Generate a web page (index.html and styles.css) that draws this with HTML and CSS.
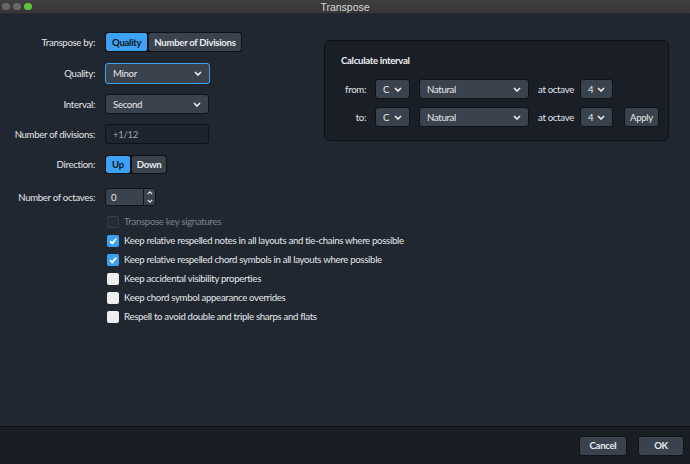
FILE: index.html
```html
<!DOCTYPE html>
<html>
<head>
<meta charset="utf-8">
<link rel="stylesheet" href="styles.css">
</head>
<body>
<div class="window">
  <div class="titlebar">
    <div class="lights">
      <span class="light grey"></span>
      <span class="light grey"></span>
      <span class="light green"></span>
    </div>
    <div class="title">Transpose</div>
  </div>
  <div class="main">
    <div class="form">
      <div class="row r1">
        <div class="label">Transpose by:</div>
        <div class="seg">
          <span class="segbtn active">Quality</span>
          <span class="segbtn">Number of Divisions</span>
        </div>
      </div>
      <div class="row r2">
        <div class="label">Quality:</div>
        <div class="select focus w105"><span>Minor</span><svg class="chev" viewBox="0 0 8 5"><path d="M1 1 L4 4 L7 1"/></svg></div>
      </div>
      <div class="row r3">
        <div class="label">Interval:</div>
        <div class="select w104"><span>Second</span><svg class="chev" viewBox="0 0 8 5"><path d="M1 1 L4 4 L7 1"/></svg></div>
      </div>
      <div class="row r4">
        <div class="label">Number of divisions:</div>
        <div class="input w104">+1/12</div>
      </div>
      <div class="row r5">
        <div class="label">Direction:</div>
        <div class="seg">
          <span class="segbtn active">Up</span>
          <span class="segbtn">Down</span>
        </div>
      </div>
      <div class="row r6">
        <div class="label">Number of octaves:</div>
        <div class="spin">
          <span class="spinval">0</span>
          <span class="spinarrows">
            <svg viewBox="0 0 8 5"><path d="M1 4 L4 1 L7 4"/></svg>
            <svg viewBox="0 0 8 5"><path d="M1 1 L4 4 L7 1"/></svg>
          </span>
        </div>
      </div>
      <div class="checks">
        <div class="check disabled"><span class="box"></span><span>Transpose key signatures</span></div>
        <div class="check"><span class="box on"><svg viewBox="0 0 10 10"><path d="M2 5.2 L4.2 7.4 L8.2 2.6"/></svg></span><span>Keep relative respelled notes in all layouts and tie-chains where possible</span></div>
        <div class="check"><span class="box on"><svg viewBox="0 0 10 10"><path d="M2 5.2 L4.2 7.4 L8.2 2.6"/></svg></span><span>Keep relative respelled chord symbols in all layouts where possible</span></div>
        <div class="check"><span class="box"></span><span>Keep accidental visibility properties</span></div>
        <div class="check"><span class="box"></span><span>Keep chord symbol appearance overrides</span></div>
        <div class="check"><span class="box"></span><span>Respell to avoid double and triple sharps and flats</span></div>
      </div>
    </div>
    <div class="panel">
      <div class="panel-title">Calculate interval</div>
      <div class="prow p1">
        <div class="plabel">from:</div>
        <div class="select w34"><span>C</span><svg class="chev" viewBox="0 0 8 5"><path d="M1 1 L4 4 L7 1"/></svg></div>
        <div class="select w109"><span>Natural</span><svg class="chev" viewBox="0 0 8 5"><path d="M1 1 L4 4 L7 1"/></svg></div>
        <div class="octlabel">at octave</div>
        <div class="select w32"><span>4</span><svg class="chev" viewBox="0 0 8 5"><path d="M1 1 L4 4 L7 1"/></svg></div>
      </div>
      <div class="prow p2">
        <div class="plabel">to:</div>
        <div class="select w34"><span>C</span><svg class="chev" viewBox="0 0 8 5"><path d="M1 1 L4 4 L7 1"/></svg></div>
        <div class="select w109"><span>Natural</span><svg class="chev" viewBox="0 0 8 5"><path d="M1 1 L4 4 L7 1"/></svg></div>
        <div class="octlabel">at octave</div>
        <div class="select w32"><span>4</span><svg class="chev" viewBox="0 0 8 5"><path d="M1 1 L4 4 L7 1"/></svg></div>
        <div class="btn apply">Apply</div>
      </div>
    </div>
  </div>
  <div class="footer">
    <div class="btn fbtn cancel">Cancel</div>
    <div class="btn fbtn ok">OK</div>
  </div>
</div>
</body>
</html>
```

FILE: styles.css
```css
* { box-sizing: border-box; }
html, body { margin: 0; padding: 0; }
body {
  width: 690px;
  height: 464px;
  overflow: hidden;
  background: #212731;
  font-family: "Lato", "Open Sans", sans-serif;
  font-size: 9.6px;
  letter-spacing: -0.3px;
  color: #e3e6ea;
  white-space: nowrap;
}
.window { display: flex; flex-direction: column; height: 464px; }
.titlebar {
  height: 14px;
  background: linear-gradient(#3f3f40, #363637);
  border-bottom: 1px solid #2a2a2b;
  display: flex;
  align-items: center;
  position: relative;
}
.lights { display: flex; gap: 3.5px; padding-left: 2px; }
.light { width: 7.5px; height: 7.5px; border-radius: 50%; display: block; }
.light.grey { background: #676767; }
.light.green { background: #5fc43d; }
.title {
  position: absolute;
  left: 0; right: 0; top: 0;
  text-align: center;
  line-height: 14px;
  font-size: 10.5px;
  letter-spacing: 0;
  color: #d8d8d8;
  font-family: "Liberation Sans", sans-serif;
}
.main {
  flex: 1;
  display: flex;
  background: #212731;
  border-bottom: 1px solid #0b0d11;
}
.form { width: 324px; flex: none; padding-top: 18px; }
.row { display: flex; align-items: center; }
.label {
  width: 95px;
  flex: none;
  text-align: right;
  margin-right: 10px;
}
.r1 { height: 20px; }
.r2 { height: 21px; margin-top: 11px; }
.r3 { height: 20px; margin-top: 10px; }
.r4 { height: 20px; margin-top: 10px; }
.r5 { height: 19px; margin-top: 11px; }
.r6 { height: 18px; margin-top: 14px; }

.seg {
  display: flex;
  height: 100%;
  background: #101318;
  border: 1px solid #0e1115;
  border-radius: 3px;
  gap: 2px;
  overflow: hidden;
}
.segbtn {
  display: flex;
  align-items: center;
  padding: 0 5px;
  background: #3a424e;
  color: #e8ebee;
  font-weight: bold;
  border-radius: 2px;
}
.segbtn.active { background: #3da2f6; color: #0d1520; padding: 0 6px; }

.select {
  height: 100%;
  background: #3a424e;
  border: 1px solid #0f1216;
  border-radius: 3px;
  display: flex;
  align-items: center;
  justify-content: space-between;
  padding: 0 7px 0 7px;
  color: #e6e9ec;
  flex: none;
}
.select.focus { border: 1px solid #3ea2f2; }
.chev { width: 8px; height: 5px; fill: none; stroke: #eef0f2; stroke-width: 1.6; }
.w105 { width: 105px; }
.w104 { width: 104px; }
.input {
  height: 100%;
  background: #1e242d;
  border: 1px solid #0f1216;
  border-radius: 3px;
  display: flex;
  align-items: center;
  padding: 0 7px;
  color: #9ca3ab;
}
.spin {
  width: 51px;
  height: 100%;
  display: flex;
  background: #3a424e;
  border: 1px solid #0f1216;
  border-radius: 3px;
}
.spinval { flex: 1; display: flex; align-items: center; padding-left: 5px; }
.spinarrows {
  width: 12px;
  border-left: 1px solid #12161b;
  display: flex;
  flex-direction: column;
  align-items: center;
  justify-content: space-around;
}
.spinarrows svg { width: 6px; height: 4px; fill: none; stroke: #e6e9ec; stroke-width: 1.5; }

.checks { margin-top: 6px; padding-left: 107px; }
.check { height: 19px; display: flex; align-items: center; gap: 5px; color: #e4e7ea; }
.box {
  width: 12px; height: 12px;
  flex: none;
  border-radius: 2px;
  background: #eeeeee;
  display: flex; align-items: center; justify-content: center;
}
.box.on { background: #3ba0f0; }
.box svg { width: 10px; height: 10px; fill: none; stroke: #ffffff; stroke-width: 1.7; }
.check.disabled { color: #7b828a; }
.check.disabled .box { background: #262c35; border: 1px solid #363d47; }

.panel {
  margin-top: 26px;
  width: 345px;
  height: 101px;
  flex: none;
  background: #1a1f27;
  border: 1px solid #0c0f13;
  border-radius: 6px;
  padding: 13px 0 0 0;
}
.panel-title { padding-left: 16px; font-weight: bold; color: #eef0f2; height: 13px; line-height: 13px; }
.prow { display: flex; align-items: center; height: 20px; }
.p1 { margin-top: 12px; }
.p2 { margin-top: 8px; }
.plabel { width: 41px; text-align: right; margin-right: 9px; flex: none; }
.w34 { width: 35px; margin-right: 9px; }
.w109 { width: 110px; margin-right: 9px; }
.w32 { width: 33px; }
.octlabel { width: 42px; flex: none; }
.btn {
  height: 20px;
  background: #3a424e;
  border: 1px solid #0f1216;
  border-radius: 3px;
  display: flex;
  align-items: center;
  justify-content: center;
  color: #e6e9ec;
}
.apply { width: 35px; margin-left: 11px; }
.footer {
  height: 37px;
  background: #191d24;
  display: flex;
  justify-content: flex-end;
  align-items: center;
  padding-right: 6px;
  gap: 11px;
}
.fbtn { font-weight: bold; }
.cancel { width: 48px; }
.ok { width: 46px; }
```
